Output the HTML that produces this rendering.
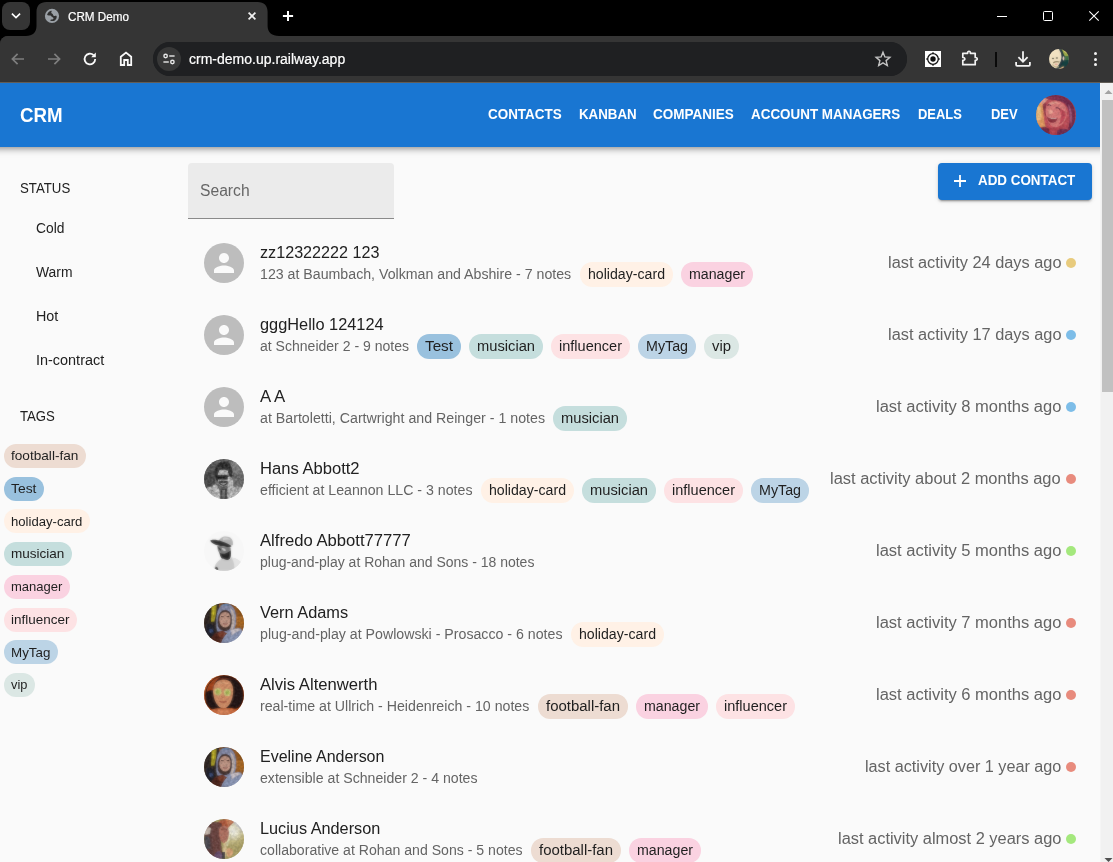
<!DOCTYPE html>
<html lang="en"><head><meta charset="utf-8"><title>CRM Demo</title>
<style>
html,body{margin:0;padding:0}
body{width:1113px;height:862px;overflow:hidden;position:relative;background:#fafafa;font-family:"Liberation Sans", sans-serif}
.t{position:absolute;white-space:nowrap;line-height:1;transform-origin:0 0;display:block}
svg{display:block;overflow:visible}
</style></head>
<body>
<svg width="0" height="0" style="position:absolute"><defs>
<filter id="nz" x="0" y="0" width="100%" height="100%"><feTurbulence type="fractalNoise" baseFrequency="0.42" numOctaves="2" seed="7"/><feColorMatrix type="matrix" values="0 0 0 0 0  0 0 0 0 0  0 0 0 0 0  1.6 0 0 0 -0.45"/></filter>
<filter id="nw" x="0" y="0" width="100%" height="100%"><feTurbulence type="fractalNoise" baseFrequency="0.5" numOctaves="2" seed="3"/><feColorMatrix type="matrix" values="0 0 0 0 1  0 0 0 0 1  0 0 0 0 1  0 1.6 0 0 -0.55"/></filter>
</defs></svg>
<div style="position:absolute;left:0;top:0;width:1113px;height:50px;background:#000"></div>
<div style="position:absolute;left:2px;top:2px;width:28px;height:28px;border-radius:8px;background:#353535"></div>
<svg style="position:absolute;left:10px;top:10px" width="12" height="12" viewBox="0 0 12 12"><path d="M1.9 3.6 L6 7.6 L10.1 3.6" fill="none" stroke="#fff" stroke-width="1.6"/></svg>
<div style="position:absolute;left:0;top:36px;width:1113px;height:46px;background:#353535;border-radius:8px 0 0 0"></div>
<div style="position:absolute;left:0;top:36px;width:1113px;height:46px;background:#353535;border-radius:8px 0 0 0"></div>
<svg style="position:absolute;left:26px;top:2px" width="253" height="34" viewBox="0 0 253 34">
<path d="M0 34 C6.5 34 10.5 30.5 10.5 24 L10.5 10 C10.5 3.5 14 0 20.5 0 L231.6 0 C238 0 241.6 3.5 241.6 10 L241.6 24 C241.6 30.5 246 34 253 34 Z" fill="#353535"/></svg>
<svg style="position:absolute;left:44px;top:8px" width="16" height="16" viewBox="0 0 16 16">
<circle cx="8" cy="7.95" r="7.1" fill="#9aa0a6"/>
<path d="M3.1 7 C3.4 5 4.8 3.4 6.6 2.9 C7.6 2.7 8 3.2 7.4 4 C6.9 4.8 7.6 5.2 8.4 5.8 C9.2 6.4 8.9 7.3 9.6 7.7 C10.6 8.3 11.6 7.6 12.6 8 C13 9.6 12.2 11.4 10.8 12.4 C9.6 13.1 8 13.2 6.6 12.8 C6 12.4 6.4 11.6 7.4 11.5 C8.6 11.5 9.6 11 9.5 10.2 C9.4 9.4 8.4 9.4 7.8 8.8 C7.2 8.2 7.2 7.5 6.4 7.4 C5.2 7.3 4 7.6 3.1 7Z" fill="#303030"/>
</svg>
<svg style="position:absolute;left:246px;top:10px" width="12" height="12" viewBox="0 0 12 12"><path d="M2.6 2.6 L9.4 9.4 M9.4 2.6 L2.6 9.4" stroke="#f0f0f0" stroke-width="1.7" fill="none"/></svg>
<svg style="position:absolute;left:281px;top:9px" width="14" height="14" viewBox="0 0 14 14"><path d="M7 1.9 V12.1 M1.9 7 H12.1" stroke="#fff" stroke-width="2" fill="none"/></svg>
<div style="position:absolute;left:997px;top:15.5px;width:10px;height:1px;background:#fff"></div>
<div style="position:absolute;left:1043px;top:11px;width:10px;height:10px;box-sizing:border-box;border:1px solid #fff;border-radius:1.5px"></div>
<svg style="position:absolute;left:1089px;top:11px" width="10" height="10" viewBox="0 0 10 10"><path d="M0.3 0.3 L9.7 9.7 M9.7 0.3 L0.3 9.7" stroke="#fff" stroke-width="1.1" fill="none"/></svg>
<svg style="position:absolute;left:10px;top:51px" width="16" height="16" viewBox="0 0 16 16"><path d="M14 8 H2.8 M7.6 2.8 L2.4 8 L7.6 13.2" stroke="#7e7e7e" stroke-width="1.7" fill="none"/></svg>
<svg style="position:absolute;left:46px;top:51px" width="16" height="16" viewBox="0 0 16 16"><path d="M2 8 H13.2 M8.4 2.8 L13.6 8 L8.4 13.2" stroke="#7e7e7e" stroke-width="1.7" fill="none"/></svg>
<svg style="position:absolute;left:82px;top:51px" width="16" height="16" viewBox="0 0 16 16"><path d="M13.2 8 A5.3 5.3 0 1 1 11.6 4.2" stroke="#fafafa" stroke-width="1.8" fill="none"/><path d="M13.8 1.6 V6.2 H9.2 Z" fill="#fafafa"/></svg>
<svg style="position:absolute;left:118px;top:50px" width="16" height="17" viewBox="0 0 16 17"><path d="M2.8 15 V6.8 L8 2.6 L13.2 6.8 V15 H9.8 V10 H6.2 V15 Z" stroke="#fafafa" stroke-width="1.8" fill="none" stroke-linejoin="miter"/></svg>
<div style="position:absolute;left:152.5px;top:42px;width:754px;height:34px;border-radius:17px;background:#202124"></div>
<div style="position:absolute;left:153px;top:42px;width:754px;height:34px;border-radius:17px;background:#1f2022"></div>
<div style="position:absolute;left:157px;top:47px;width:24px;height:24px;border-radius:12px;background:#383838"></div>
<svg style="position:absolute;left:161px;top:51px" width="16" height="16" viewBox="0 0 16 16" fill="none" stroke="#e8e8e8" stroke-width="1.4">
<circle cx="4.6" cy="5" r="1.7"/><path d="M8.2 5 H13.6"/><circle cx="11.4" cy="11" r="1.7"/><path d="M2.4 11 H7.8"/></svg>
<svg style="position:absolute;left:874px;top:50px" width="18" height="18" viewBox="0 0 18 18"><path d="M9 2.2 L10.9 6.9 L15.9 7.3 L12.1 10.6 L13.3 15.5 L9 12.9 L4.7 15.5 L5.9 10.6 L2.1 7.3 L7.1 6.9 Z" fill="none" stroke="#c4c4c4" stroke-width="1.4" stroke-linejoin="miter"/></svg>
<div style="position:absolute;left:925px;top:51px;width:16px;height:16px;background:#fff"></div>
<svg style="position:absolute;left:925px;top:51px" width="16" height="16" viewBox="0 0 16 16"><circle cx="8" cy="8" r="5.3" fill="none" stroke="#111" stroke-width="1.3"/><circle cx="8" cy="8" r="2.7" fill="#111"/><path d="M8 1 V3 M8 13 V15 M1 8 H3 M13 8 H15" stroke="#111" stroke-width="1"/></svg>
<svg style="position:absolute;left:960px;top:49px" width="20" height="20" viewBox="0 0 20 20"><path d="M2.8 4.3 H7.6 C7.3 1.6 10.7 1.6 10.4 4.3 H15.2 V8.5 C17.9 8.2 17.9 11.6 15.2 11.3 V15.7 H2.8 V11.3 C5.5 11.6 5.5 8.2 2.8 8.5 Z" fill="none" stroke="#f2f2f2" stroke-width="1.7" stroke-linejoin="round"/></svg>
<div style="position:absolute;left:995px;top:51.5px;width:2px;height:15px;background:#0a0a0a"></div>
<svg style="position:absolute;left:1014px;top:50px" width="18" height="18" viewBox="0 0 18 18"><path d="M9 1.2 V11.4 M4.4 7.2 L9 11.8 L13.6 7.2" stroke="#f2f2f2" stroke-width="1.8" fill="none"/><path d="M2.1 12 V14.8 Q2.1 15.8 3.1 15.8 H14.9 Q15.9 15.8 15.9 14.8 V12" stroke="#f2f2f2" stroke-width="1.8" fill="none"/></svg>
<svg style="position:absolute;left:1049px;top:48.9px" width="20" height="20" viewBox="0 0 20 20"><defs><clipPath id="pc"><circle cx="10" cy="10" r="10"/></clipPath><filter id="pf" x="-10%" y="-10%" width="120%" height="120%"><feGaussianBlur stdDeviation="0.8"/></filter>
</defs>
<g clip-path="url(#pc)"><g filter="url(#pf)"><rect x="-2" y="-2" width="24" height="24" fill="#f2e2c2"/>
<path d="M0 6 C1 10 1 14 3 18 L0 18Z" fill="#cfc4a8"/>
<path d="M11 -1 C15 5 15 13 8 20.5 L21 21 L21 -1Z" fill="#17403f"/>
<path d="M12.4 0 L20 0 L20 9 C18 7 16 8 15 6 C14.4 4 13.6 2 12.4 0Z" fill="#9aa848"/>
<path d="M14 1.6 C16 1 18 2.4 18.6 4.6 C17 4 15.4 3.6 14 1.6Z" fill="#dccb7c"/>
<path d="M15.6 7 H20 V11 H16Z" fill="#3f6f45"/>
<path d="M10.6 -0.6 C14.8 5 14.8 13 7.6 20.4" stroke="#0b2736" stroke-width="2" fill="none"/>
<ellipse cx="14.5" cy="9.4" rx="0.9" ry="2.1" fill="#f2d6c6"/>
<path d="M9 20 C11 19.6 13 18.4 14.4 17 L15 20Z" fill="#e8b484"/>
<ellipse cx="4" cy="9.5" rx="1.2" ry="0.7" fill="#5c5848"/><ellipse cx="7.9" cy="9" rx="1.2" ry="0.7" fill="#5c5848"/>
<path d="M4.2 13.9 C6 12.6 8.4 12.4 10.4 13" stroke="#857655" stroke-width="1.3" fill="none"/>
<ellipse cx="7.2" cy="15.3" rx="1.5" ry="0.9" fill="#e8a898"/>
<path d="M3.4 15.6 C4.6 18 8 18.8 10 17.4" stroke="#b9ab86" stroke-width="1.2" fill="none"/>
</g><g opacity="0.55"><rect x="-2" y="-2" width="24" height="24" fill="#f2e2c2"/>
<path d="M0 6 C1 10 1 14 3 18 L0 18Z" fill="#cfc4a8"/>
<path d="M11 -1 C15 5 15 13 8 20.5 L21 21 L21 -1Z" fill="#17403f"/>
<path d="M12.4 0 L20 0 L20 9 C18 7 16 8 15 6 C14.4 4 13.6 2 12.4 0Z" fill="#9aa848"/>
<path d="M14 1.6 C16 1 18 2.4 18.6 4.6 C17 4 15.4 3.6 14 1.6Z" fill="#dccb7c"/>
<path d="M15.6 7 H20 V11 H16Z" fill="#3f6f45"/>
<path d="M10.6 -0.6 C14.8 5 14.8 13 7.6 20.4" stroke="#0b2736" stroke-width="2" fill="none"/>
<ellipse cx="14.5" cy="9.4" rx="0.9" ry="2.1" fill="#f2d6c6"/>
<path d="M9 20 C11 19.6 13 18.4 14.4 17 L15 20Z" fill="#e8b484"/>
<ellipse cx="4" cy="9.5" rx="1.2" ry="0.7" fill="#5c5848"/><ellipse cx="7.9" cy="9" rx="1.2" ry="0.7" fill="#5c5848"/>
<path d="M4.2 13.9 C6 12.6 8.4 12.4 10.4 13" stroke="#857655" stroke-width="1.3" fill="none"/>
<ellipse cx="7.2" cy="15.3" rx="1.5" ry="0.9" fill="#e8a898"/>
<path d="M3.4 15.6 C4.6 18 8 18.8 10 17.4" stroke="#b9ab86" stroke-width="1.2" fill="none"/>
</g></g></svg>
<div style="position:absolute;left:1093.8px;top:51.7px;width:3px;height:3px;border-radius:50%;background:#f2f2f2"></div>
<div style="position:absolute;left:1093.8px;top:57.5px;width:3px;height:3px;border-radius:50%;background:#f2f2f2"></div>
<div style="position:absolute;left:1093.8px;top:63.3px;width:3px;height:3px;border-radius:50%;background:#f2f2f2"></div>
<div style="position:absolute;left:0;top:82px;width:1100px;height:780px;background:#fafafa"></div>
<div style="position:absolute;left:0;top:82px;width:1113px;height:1px;background:#625d56"></div>
<div style="position:absolute;left:-20px;top:83px;width:1140px;height:64px;background:#1976d2;clip-path:inset(0 0 -20px 0);box-shadow:0 2px 4px -1px rgba(0,0,0,.2),0 4px 5px 0 rgba(0,0,0,.14),0 1px 10px 0 rgba(0,0,0,.12)"></div>
<svg style="position:absolute;left:1036px;top:95px" width="40" height="40" viewBox="0 0 40 40"><defs><clipPath id="cu"><circle cx="20" cy="20" r="20"/></clipPath><filter id="fu" x="-10%" y="-10%" width="120%" height="120%"><feGaussianBlur stdDeviation="0.8"/></filter></defs><g clip-path="url(#cu)"><g filter="url(#fu)"><rect x="-4" y="-4" width="48" height="48" fill="#a03850"/><rect width="40" height="40" fill="#c44d58"/>
<path d="M0 6 C3 3 7 3 8.6 6 C7 12 7 22 9.6 32 L0 32Z" fill="#eda062"/>
<path d="M0 12 C1.6 10 4 10.4 5 13 L5.4 24 L0 26Z" fill="#f4c382"/>
<path d="M3 4 C6 1.6 10 2 12 4.6 C10 6 8.6 8 8 11 C6 9 4 7 3 4Z" fill="#eaa092"/>
<path d="M9 3 C16 -2 30 -1 36 8 C41 16 40 30 34 38 L29 40 C35 31 35 17 30 10 C26 5 15 5 9 3Z" fill="#74264a"/>
<path d="M32 9 C36 13 37 23 35 31 C34 27 34 17 32 9Z" fill="#a85a7c"/>
<path d="M12 2.4 C18 0.6 26 1.4 31 6 C25 3.6 18 3.4 12 4.6Z" fill="#8a3050"/>
<path d="M6.6 10 C7.8 8 9.8 7.6 10.6 9 C9.6 13 9.8 18 11 23 C8.8 20 6.8 15 6.6 10Z" fill="#8a2d40"/>
<path d="M9.6 16 C9 9 14.6 5 21 6 C28.4 7 32 13 30.6 21 C29 28 23.6 33 18 32 C13 31 10 24 9.6 16Z" fill="#e27c7b"/>
<path d="M12.6 8.6 C16 6.4 21 6.6 24.6 8.6 C21 8.4 16 8.6 13.2 10.4Z" fill="#f0a392"/>
<path d="M23 14 C26 13.6 29.8 16 29.8 20 C29 25 26 28.6 22.6 29.6 C25.4 25 26 19 23 14Z" fill="#c74858"/>
<path d="M12.4 15 C14 14 16.6 15 17.2 17 C16.6 19.4 14 20 12.4 18.6Z" fill="#f3a696"/>
<path d="M11.2 10.4 C12.4 9.6 14.4 9.8 15.2 10.8" stroke="#5a1c38" stroke-width="1.1" fill="none"/>
<path d="M19.6 13 C21 12.6 23 13.2 23.8 14.4" stroke="#5a1c38" stroke-width="1.1" fill="none"/>
<path d="M11 21.4 C13.6 23.4 18.6 24 21.8 22.4 C21.2 26.6 17.6 28.6 14.4 27.4 C12.2 26.4 11.2 24 11 21.4Z" fill="#8c2838"/>
<path d="M11.2 21.6 C13.6 23.4 18.6 23.8 21.6 22.4 C20 24.6 14 24.8 11.2 21.6Z" fill="#f9e2da"/>
<path d="M11 31 C14 33.4 20 33.4 25 30.4 L28 40 L9 40Z" fill="#b8404e"/>
<path d="M3 34 C7 31.6 11 32 13 34 L14 40 L3 40Z" fill="#7a2844"/>
<path d="M21 36 C25 33 31 33 34 36 L34 40 L21 40Z" fill="#6f2a50"/><rect width="40" height="40" filter="url(#nz)" opacity="0.25"/><rect width="40" height="40" filter="url(#nw)" opacity="0.14"/></g><g opacity="0.5"><rect x="-4" y="-4" width="48" height="48" fill="#a03850"/><rect width="40" height="40" fill="#c44d58"/>
<path d="M0 6 C3 3 7 3 8.6 6 C7 12 7 22 9.6 32 L0 32Z" fill="#eda062"/>
<path d="M0 12 C1.6 10 4 10.4 5 13 L5.4 24 L0 26Z" fill="#f4c382"/>
<path d="M3 4 C6 1.6 10 2 12 4.6 C10 6 8.6 8 8 11 C6 9 4 7 3 4Z" fill="#eaa092"/>
<path d="M9 3 C16 -2 30 -1 36 8 C41 16 40 30 34 38 L29 40 C35 31 35 17 30 10 C26 5 15 5 9 3Z" fill="#74264a"/>
<path d="M32 9 C36 13 37 23 35 31 C34 27 34 17 32 9Z" fill="#a85a7c"/>
<path d="M12 2.4 C18 0.6 26 1.4 31 6 C25 3.6 18 3.4 12 4.6Z" fill="#8a3050"/>
<path d="M6.6 10 C7.8 8 9.8 7.6 10.6 9 C9.6 13 9.8 18 11 23 C8.8 20 6.8 15 6.6 10Z" fill="#8a2d40"/>
<path d="M9.6 16 C9 9 14.6 5 21 6 C28.4 7 32 13 30.6 21 C29 28 23.6 33 18 32 C13 31 10 24 9.6 16Z" fill="#e27c7b"/>
<path d="M12.6 8.6 C16 6.4 21 6.6 24.6 8.6 C21 8.4 16 8.6 13.2 10.4Z" fill="#f0a392"/>
<path d="M23 14 C26 13.6 29.8 16 29.8 20 C29 25 26 28.6 22.6 29.6 C25.4 25 26 19 23 14Z" fill="#c74858"/>
<path d="M12.4 15 C14 14 16.6 15 17.2 17 C16.6 19.4 14 20 12.4 18.6Z" fill="#f3a696"/>
<path d="M11.2 10.4 C12.4 9.6 14.4 9.8 15.2 10.8" stroke="#5a1c38" stroke-width="1.1" fill="none"/>
<path d="M19.6 13 C21 12.6 23 13.2 23.8 14.4" stroke="#5a1c38" stroke-width="1.1" fill="none"/>
<path d="M11 21.4 C13.6 23.4 18.6 24 21.8 22.4 C21.2 26.6 17.6 28.6 14.4 27.4 C12.2 26.4 11.2 24 11 21.4Z" fill="#8c2838"/>
<path d="M11.2 21.6 C13.6 23.4 18.6 23.8 21.6 22.4 C20 24.6 14 24.8 11.2 21.6Z" fill="#f9e2da"/>
<path d="M11 31 C14 33.4 20 33.4 25 30.4 L28 40 L9 40Z" fill="#b8404e"/>
<path d="M3 34 C7 31.6 11 32 13 34 L14 40 L3 40Z" fill="#7a2844"/>
<path d="M21 36 C25 33 31 33 34 36 L34 40 L21 40Z" fill="#6f2a50"/><rect width="40" height="40" filter="url(#nz)" opacity="0.25"/><rect width="40" height="40" filter="url(#nw)" opacity="0.14"/></g></g></svg>
<div style="position:absolute;left:4px;top:444px;width:82px;height:24px;border-radius:12px;background:#eddcd2"></div>
<div style="position:absolute;left:4px;top:476.8px;width:40px;height:24px;border-radius:12px;background:#99c1de"></div>
<div style="position:absolute;left:4px;top:509.2px;width:86px;height:24px;border-radius:12px;background:#fff1e6"></div>
<div style="position:absolute;left:4px;top:541.8px;width:68px;height:24px;border-radius:12px;background:#c5dedd"></div>
<div style="position:absolute;left:4px;top:574.8px;width:66px;height:24px;border-radius:12px;background:#fad2e1"></div>
<div style="position:absolute;left:4px;top:607.6px;width:73px;height:24px;border-radius:12px;background:#fde2e4"></div>
<div style="position:absolute;left:4px;top:640.2px;width:54px;height:24px;border-radius:12px;background:#bcd4e6"></div>
<div style="position:absolute;left:4px;top:673px;width:31px;height:24px;border-radius:12px;background:#dbe7e4"></div>
<div style="position:absolute;left:188px;top:163px;width:206px;height:55px;border-radius:4px 4px 0 0;background:#ebebeb"></div>
<div style="position:absolute;left:188px;top:218px;width:206px;height:1px;background:#8a8a8a"></div>
<div style="position:absolute;left:938px;top:163px;width:154px;height:36.5px;border-radius:4px;background:#1976d2;box-shadow:0 3px 1px -2px rgba(0,0,0,.2),0 2px 2px 0 rgba(0,0,0,.14),0 1px 5px 0 rgba(0,0,0,.12)"></div>
<svg style="position:absolute;left:954px;top:175px" width="12" height="12" viewBox="0 0 12 12"><path d="M6 0 V12 M0 6 H12" stroke="#fff" stroke-width="1.8"/></svg>
<svg style="position:absolute;left:204px;top:243px" width="40" height="40" viewBox="0 0 40 40"><circle cx="20" cy="20" r="20" fill="#bdbdbd"/><g transform="translate(5 5) scale(1.25)"><path d="M12 12c2.21 0 4-1.79 4-4s-1.79-4-4-4-4 1.79-4 4 1.79 4 4 4zm0 2c-2.67 0-8 1.34-8 4v2h16v-2c0-2.66-5.33-4-8-4z" fill="#fafafa"/></g></svg>
<div style="position:absolute;left:579.5px;top:262px;width:93px;height:24.5px;border-radius:12.25px;background:#fff1e6"></div>
<div style="position:absolute;left:680.5px;top:262px;width:72px;height:24.5px;border-radius:12.25px;background:#fad2e1"></div>
<div style="position:absolute;left:1066px;top:258px;width:10px;height:10px;border-radius:50%;background:#e8cb7d"></div>
<svg style="position:absolute;left:204px;top:315px" width="40" height="40" viewBox="0 0 40 40"><circle cx="20" cy="20" r="20" fill="#bdbdbd"/><g transform="translate(5 5) scale(1.25)"><path d="M12 12c2.21 0 4-1.79 4-4s-1.79-4-4-4-4 1.79-4 4 1.79 4 4 4zm0 2c-2.67 0-8 1.34-8 4v2h16v-2c0-2.66-5.33-4-8-4z" fill="#fafafa"/></g></svg>
<div style="position:absolute;left:417.3px;top:334px;width:44px;height:24.5px;border-radius:12.25px;background:#99c1de"></div>
<div style="position:absolute;left:469.3px;top:334px;width:74px;height:24.5px;border-radius:12.25px;background:#c5dedd"></div>
<div style="position:absolute;left:551.3px;top:334px;width:79px;height:24.5px;border-radius:12.25px;background:#fde2e4"></div>
<div style="position:absolute;left:638.3px;top:334px;width:58px;height:24.5px;border-radius:12.25px;background:#bcd4e6"></div>
<div style="position:absolute;left:704.3px;top:334px;width:35px;height:24.5px;border-radius:12.25px;background:#dbe7e4"></div>
<div style="position:absolute;left:1066px;top:330px;width:10px;height:10px;border-radius:50%;background:#7dbde8"></div>
<svg style="position:absolute;left:204px;top:387px" width="40" height="40" viewBox="0 0 40 40"><circle cx="20" cy="20" r="20" fill="#bdbdbd"/><g transform="translate(5 5) scale(1.25)"><path d="M12 12c2.21 0 4-1.79 4-4s-1.79-4-4-4-4 1.79-4 4 1.79 4 4 4zm0 2c-2.67 0-8 1.34-8 4v2h16v-2c0-2.66-5.33-4-8-4z" fill="#fafafa"/></g></svg>
<div style="position:absolute;left:553.3px;top:406px;width:74px;height:24.5px;border-radius:12.25px;background:#c5dedd"></div>
<div style="position:absolute;left:1066px;top:402px;width:10px;height:10px;border-radius:50%;background:#7dbde8"></div>
<svg style="position:absolute;left:204px;top:459px" width="40" height="40" viewBox="0 0 40 40"><defs><clipPath id="c3"><circle cx="20" cy="20" r="20"/></clipPath><filter id="f3" x="-10%" y="-10%" width="120%" height="120%"><feGaussianBlur stdDeviation="0.8"/></filter></defs><g clip-path="url(#c3)"><g filter="url(#f3)"><rect x="-4" y="-4" width="48" height="48" fill="#6c6c6c"/><rect width="40" height="40" fill="#6c6c6c"/>
<rect x="0" y="0" width="13" height="14" fill="#5a5a5a"/><rect x="0" y="13" width="11" height="16" fill="#474747"/>
<rect x="27" y="2" width="13" height="14" fill="#8c8c8c"/><rect x="29" y="14" width="11" height="16" fill="#707070"/>
<path d="M11 18 C9 6 16 2 20 2.5 C26 2 30 8 28 19 L26 22 L13 22Z" fill="#262626"/>
<path d="M13.8 15 C13.8 10.5 24.8 10.5 24.8 15 L24.6 23 C23.6 29 15 29 14 23Z" fill="#b4b4b4"/>
<path d="M15 11.5 C17 10.4 22 10.4 24 11.8 L24 15 L15 15Z" fill="#cfcfcf"/>
<rect x="12.4" y="16" width="12.6" height="4.6" rx="2.2" fill="#161616"/>
<path d="M14.6 22.4 C16 21.6 22.6 21.6 24 22.4 C24 28 15 28.4 14.6 22.4Z" fill="#303030"/>
<path d="M16.2 23.8 C17.6 24.8 21 24.8 22.2 23.8 C21.6 26.2 17 26.2 16.2 23.8Z" fill="#f2f2f2"/>
<path d="M7 40 C6 32 8 26 11 25.5 C14 26 15.5 30 16.5 40Z" fill="#d8d8d8"/>
<path d="M23.6 18 C26 16.5 28.6 18 29 22 C30 28 29 34 27 40 L22 40 C23.4 32 24.6 26 23.6 18Z" fill="#d2d2d2"/>
<path d="M0 31 C4 27 8 27 10 29 L12 40 L0 40Z" fill="#cdcdcd"/>
<path d="M40 30 C36 26.5 31 27 29 29 L27 40 L40 40Z" fill="#c6c6c6"/>
<path d="M16.4 30 L23 29.5 L23.4 40 L16 40Z" fill="#333"/>
<path d="M18 31 L21 31 L20.6 40 L18.6 40Z" fill="#8a8a8a"/>
<rect width="40" height="40" filter="url(#nz)" opacity="0.55"/><rect width="40" height="40" filter="url(#nw)" opacity="0.3"/></g><g opacity="0.5"><rect x="-4" y="-4" width="48" height="48" fill="#6c6c6c"/><rect width="40" height="40" fill="#6c6c6c"/>
<rect x="0" y="0" width="13" height="14" fill="#5a5a5a"/><rect x="0" y="13" width="11" height="16" fill="#474747"/>
<rect x="27" y="2" width="13" height="14" fill="#8c8c8c"/><rect x="29" y="14" width="11" height="16" fill="#707070"/>
<path d="M11 18 C9 6 16 2 20 2.5 C26 2 30 8 28 19 L26 22 L13 22Z" fill="#262626"/>
<path d="M13.8 15 C13.8 10.5 24.8 10.5 24.8 15 L24.6 23 C23.6 29 15 29 14 23Z" fill="#b4b4b4"/>
<path d="M15 11.5 C17 10.4 22 10.4 24 11.8 L24 15 L15 15Z" fill="#cfcfcf"/>
<rect x="12.4" y="16" width="12.6" height="4.6" rx="2.2" fill="#161616"/>
<path d="M14.6 22.4 C16 21.6 22.6 21.6 24 22.4 C24 28 15 28.4 14.6 22.4Z" fill="#303030"/>
<path d="M16.2 23.8 C17.6 24.8 21 24.8 22.2 23.8 C21.6 26.2 17 26.2 16.2 23.8Z" fill="#f2f2f2"/>
<path d="M7 40 C6 32 8 26 11 25.5 C14 26 15.5 30 16.5 40Z" fill="#d8d8d8"/>
<path d="M23.6 18 C26 16.5 28.6 18 29 22 C30 28 29 34 27 40 L22 40 C23.4 32 24.6 26 23.6 18Z" fill="#d2d2d2"/>
<path d="M0 31 C4 27 8 27 10 29 L12 40 L0 40Z" fill="#cdcdcd"/>
<path d="M40 30 C36 26.5 31 27 29 29 L27 40 L40 40Z" fill="#c6c6c6"/>
<path d="M16.4 30 L23 29.5 L23.4 40 L16 40Z" fill="#333"/>
<path d="M18 31 L21 31 L20.6 40 L18.6 40Z" fill="#8a8a8a"/>
<rect width="40" height="40" filter="url(#nz)" opacity="0.55"/><rect width="40" height="40" filter="url(#nw)" opacity="0.3"/></g></g></svg>
<div style="position:absolute;left:480.8px;top:478px;width:93px;height:24.5px;border-radius:12.25px;background:#fff1e6"></div>
<div style="position:absolute;left:581.8px;top:478px;width:74px;height:24.5px;border-radius:12.25px;background:#c5dedd"></div>
<div style="position:absolute;left:663.8px;top:478px;width:79px;height:24.5px;border-radius:12.25px;background:#fde2e4"></div>
<div style="position:absolute;left:750.8px;top:478px;width:58px;height:24.5px;border-radius:12.25px;background:#bcd4e6"></div>
<div style="position:absolute;left:1066px;top:474px;width:10px;height:10px;border-radius:50%;background:#e88b7d"></div>
<svg style="position:absolute;left:204px;top:531px" width="40" height="40" viewBox="0 0 40 40"><defs><clipPath id="c4"><circle cx="20" cy="20" r="20"/></clipPath><filter id="f4" x="-10%" y="-10%" width="120%" height="120%"><feGaussianBlur stdDeviation="0.8"/></filter></defs><g clip-path="url(#c4)"><g filter="url(#f4)"><rect x="-4" y="-4" width="48" height="48" fill="#f7f7f7"/><rect width="40" height="40" fill="#f7f7f7"/>
<path d="M14.4 11.5 C15 6 21 4.5 25 6 C28.4 7.4 29.4 11 29 14.2 L22 13.6Z" fill="#b2b2b2"/>
<path d="M19 7 C22 6 25 7 26.4 9 C24 8.4 21 8.4 19 9.4Z" fill="#cfcfcf"/>
<path d="M6.2 9.6 C8 8.4 13 8.6 18 10.4 C22 11.8 26 13.4 27.8 15 L25.4 16.6 C21 15.6 16 15.2 12 14 C9 13 7 11.6 6.2 9.6Z" fill="#2e2e2e"/>
<path d="M13.2 15 C16 14.6 22 15.4 26.6 16.4 L27 22 C26 25 23 26 20 25.4 C16 24.6 13.4 20 13.2 15Z" fill="#7a7a7a"/>
<path d="M17.6 17 C19.6 16.6 21.6 17.6 22 19.6 C20.4 20.4 18.4 19.8 17.6 17Z" fill="#c9c9c9"/>
<path d="M14 16 C15.6 16.4 17 17.6 17.2 19.4 C15.6 19.6 14.2 18.4 14 16Z" fill="#3a3a3a"/>
<path d="M15.6 21.6 C18 23.6 22 23.2 26.6 19.4 C27.4 23 27 27 25 29 C22 30.6 18.4 29 17 26.6 C16 25 15.6 23.4 15.6 21.6Z" fill="#262626"/>
<path d="M10 40 C10.4 33 14 28.6 19 27.4 C22 29.6 25.4 29.4 27.4 26.4 C33 27.4 38 30 39 36 L39 40Z" fill="#cacaca"/>
<path d="M27.4 26.4 C33 27.4 38 30 39 36 L39 40 L30 40 C31 35 30 30 27.4 26.4Z" fill="#e4e4e4"/>
<path d="M11.4 36 C12.6 35.4 14 36.4 14.4 38.6 L12 40 L11 39Z" fill="#4a4a4a"/><rect width="40" height="40" filter="url(#nz)" opacity="0.0"/><rect width="40" height="40" filter="url(#nw)" opacity="0.0"/></g><g opacity="0.5"><rect x="-4" y="-4" width="48" height="48" fill="#f7f7f7"/><rect width="40" height="40" fill="#f7f7f7"/>
<path d="M14.4 11.5 C15 6 21 4.5 25 6 C28.4 7.4 29.4 11 29 14.2 L22 13.6Z" fill="#b2b2b2"/>
<path d="M19 7 C22 6 25 7 26.4 9 C24 8.4 21 8.4 19 9.4Z" fill="#cfcfcf"/>
<path d="M6.2 9.6 C8 8.4 13 8.6 18 10.4 C22 11.8 26 13.4 27.8 15 L25.4 16.6 C21 15.6 16 15.2 12 14 C9 13 7 11.6 6.2 9.6Z" fill="#2e2e2e"/>
<path d="M13.2 15 C16 14.6 22 15.4 26.6 16.4 L27 22 C26 25 23 26 20 25.4 C16 24.6 13.4 20 13.2 15Z" fill="#7a7a7a"/>
<path d="M17.6 17 C19.6 16.6 21.6 17.6 22 19.6 C20.4 20.4 18.4 19.8 17.6 17Z" fill="#c9c9c9"/>
<path d="M14 16 C15.6 16.4 17 17.6 17.2 19.4 C15.6 19.6 14.2 18.4 14 16Z" fill="#3a3a3a"/>
<path d="M15.6 21.6 C18 23.6 22 23.2 26.6 19.4 C27.4 23 27 27 25 29 C22 30.6 18.4 29 17 26.6 C16 25 15.6 23.4 15.6 21.6Z" fill="#262626"/>
<path d="M10 40 C10.4 33 14 28.6 19 27.4 C22 29.6 25.4 29.4 27.4 26.4 C33 27.4 38 30 39 36 L39 40Z" fill="#cacaca"/>
<path d="M27.4 26.4 C33 27.4 38 30 39 36 L39 40 L30 40 C31 35 30 30 27.4 26.4Z" fill="#e4e4e4"/>
<path d="M11.4 36 C12.6 35.4 14 36.4 14.4 38.6 L12 40 L11 39Z" fill="#4a4a4a"/><rect width="40" height="40" filter="url(#nz)" opacity="0.0"/><rect width="40" height="40" filter="url(#nw)" opacity="0.0"/></g></g></svg>
<div style="position:absolute;left:1066px;top:546px;width:10px;height:10px;border-radius:50%;background:#a4e87d"></div>
<svg style="position:absolute;left:204px;top:603px" width="40" height="40" viewBox="0 0 40 40"><defs><clipPath id="c5"><circle cx="20" cy="20" r="20"/></clipPath><filter id="f5" x="-10%" y="-10%" width="120%" height="120%"><feGaussianBlur stdDeviation="0.8"/></filter></defs><g clip-path="url(#c5)"><g filter="url(#f5)"><rect x="-4" y="-4" width="48" height="48" fill="#5a3a1a"/><rect width="40" height="40" fill="#8a4e16"/>
<rect x="0" y="0" width="15" height="40" fill="#2a211e"/>
<path d="M7.6 3.4 L12.6 1.4 L12.2 10 L10.4 18.4 L7 19Z" fill="#a89a1e"/>
<path d="M8.6 4 L10.6 3 L10 11 L8.6 14Z" fill="#d6c62a"/>
<path d="M2 22 C4 20 8 20.6 10 24 L10 34 L2 32Z" fill="#1c1c26"/>
<path d="M5 26 C7 25 9 26 9.6 29 L6 30Z" fill="#3a4a78"/>
<rect x="30" y="4" width="10" height="26" fill="#96581a"/>
<path d="M31 14 L40 12 L40 24 L31 22Z" fill="#b06a20"/>
<path d="M12.6 26 C10.6 10 15 1 22 0.6 C29 0.6 33.4 8 32 20 C31.4 26 29 29.4 26 30 L14 30Z" fill="#8b90ae"/>
<path d="M16 3 C19 0.6 24.6 0.4 27.6 3 C24 2.4 19.6 2.6 16 3Z" fill="#5f86b2"/>
<path d="M26 4.6 C31 8 31.6 16 30 23 C29.4 26 27.6 28 26 28.6 C28 22 28.6 12 26 4.6Z" fill="#c9b9b2"/>
<path d="M14 23 C12.6 12 16.6 7 21 7 C26.4 7 28.6 12 27.6 20 C27 26 24.6 28 21 28 C17.6 28 15 26.4 14 23Z" fill="#3c2722"/>
<path d="M15.4 18 C15 12 17.6 9 21 9 C25 9 27 12.4 26.6 18 C26.2 22.6 24 24.4 21.4 24.4 C18.4 24.4 15.8 22 15.4 18Z" fill="#c79a88"/>
<path d="M17 13.6 H19.6 M22.6 13.6 H25.2" stroke="#4a3028" stroke-width="1"/>
<path d="M19 20.6 C20.4 21.4 22.4 21.4 23.6 20.6" stroke="#8a4a44" stroke-width="1" fill="none"/>
<path d="M6 40 C7 31 14 27 19 28.6 L25 34 L24 40Z" fill="#4e2218"/>
<path d="M14 30 C17 27 20 27.6 22 30 L20 35 L15 34Z" fill="#7a3a26"/>
<path d="M17 40 C21 29 30 24 37 25.6 L40 30 L40 40Z" fill="#8e9abb"/>
<path d="M27 27 C31 25 35 25.4 37.6 27 C34 28 30 30 27.6 33Z" fill="#cfc6cc"/><rect width="40" height="40" filter="url(#nz)" opacity="0.3"/><rect width="40" height="40" filter="url(#nw)" opacity="0.16"/></g><g opacity="0.5"><rect x="-4" y="-4" width="48" height="48" fill="#5a3a1a"/><rect width="40" height="40" fill="#8a4e16"/>
<rect x="0" y="0" width="15" height="40" fill="#2a211e"/>
<path d="M7.6 3.4 L12.6 1.4 L12.2 10 L10.4 18.4 L7 19Z" fill="#a89a1e"/>
<path d="M8.6 4 L10.6 3 L10 11 L8.6 14Z" fill="#d6c62a"/>
<path d="M2 22 C4 20 8 20.6 10 24 L10 34 L2 32Z" fill="#1c1c26"/>
<path d="M5 26 C7 25 9 26 9.6 29 L6 30Z" fill="#3a4a78"/>
<rect x="30" y="4" width="10" height="26" fill="#96581a"/>
<path d="M31 14 L40 12 L40 24 L31 22Z" fill="#b06a20"/>
<path d="M12.6 26 C10.6 10 15 1 22 0.6 C29 0.6 33.4 8 32 20 C31.4 26 29 29.4 26 30 L14 30Z" fill="#8b90ae"/>
<path d="M16 3 C19 0.6 24.6 0.4 27.6 3 C24 2.4 19.6 2.6 16 3Z" fill="#5f86b2"/>
<path d="M26 4.6 C31 8 31.6 16 30 23 C29.4 26 27.6 28 26 28.6 C28 22 28.6 12 26 4.6Z" fill="#c9b9b2"/>
<path d="M14 23 C12.6 12 16.6 7 21 7 C26.4 7 28.6 12 27.6 20 C27 26 24.6 28 21 28 C17.6 28 15 26.4 14 23Z" fill="#3c2722"/>
<path d="M15.4 18 C15 12 17.6 9 21 9 C25 9 27 12.4 26.6 18 C26.2 22.6 24 24.4 21.4 24.4 C18.4 24.4 15.8 22 15.4 18Z" fill="#c79a88"/>
<path d="M17 13.6 H19.6 M22.6 13.6 H25.2" stroke="#4a3028" stroke-width="1"/>
<path d="M19 20.6 C20.4 21.4 22.4 21.4 23.6 20.6" stroke="#8a4a44" stroke-width="1" fill="none"/>
<path d="M6 40 C7 31 14 27 19 28.6 L25 34 L24 40Z" fill="#4e2218"/>
<path d="M14 30 C17 27 20 27.6 22 30 L20 35 L15 34Z" fill="#7a3a26"/>
<path d="M17 40 C21 29 30 24 37 25.6 L40 30 L40 40Z" fill="#8e9abb"/>
<path d="M27 27 C31 25 35 25.4 37.6 27 C34 28 30 30 27.6 33Z" fill="#cfc6cc"/><rect width="40" height="40" filter="url(#nz)" opacity="0.3"/><rect width="40" height="40" filter="url(#nw)" opacity="0.16"/></g></g></svg>
<div style="position:absolute;left:570.8px;top:622px;width:93px;height:24.5px;border-radius:12.25px;background:#fff1e6"></div>
<div style="position:absolute;left:1066px;top:618px;width:10px;height:10px;border-radius:50%;background:#e88b7d"></div>
<svg style="position:absolute;left:204px;top:675px" width="40" height="40" viewBox="0 0 40 40"><defs><clipPath id="c6"><circle cx="20" cy="20" r="20"/></clipPath><filter id="f6" x="-10%" y="-10%" width="120%" height="120%"><feGaussianBlur stdDeviation="0.8"/></filter></defs><g clip-path="url(#c6)"><g filter="url(#f6)"><rect x="-4" y="-4" width="48" height="48" fill="#8a3a18"/><rect width="40" height="40" fill="#b24a18"/>
<path d="M0 0 L16 0 C10 4 6 10 4 18 L0 22Z" fill="#c85a20"/>
<path d="M1.4 24 C0 10 9 1 20 0.6 C32 0.4 40 8 39.6 22 C39.4 30 34 36 28 33 L11 34 C5 35 2 30 1.4 24Z" fill="#1f1212"/>
<path d="M8 8 C12 2 24 0.6 30 5 C24 3.6 14 4 8 8Z" fill="#5a1e12"/>
<path d="M2.6 17 C3.4 8.6 9.6 3 17 1.8 C12 5 9.4 9 9 15.6 C7 15 4.6 15.6 2.6 17Z" fill="#a8441a"/>
<path d="M9 17 C8.6 8 14 4.6 19.6 4.6 C26 4.6 29.6 9 29.2 17 C28.8 25 25 33.4 19.4 33.4 C13.6 33.4 9.4 25 9 17Z" fill="#d69068"/>
<path d="M12 9 C15 6.6 24 6.6 27 9.4 C23 8.4 16 8.2 12 9Z" fill="#e2a67c"/>
<circle cx="14" cy="16.8" r="3.7" fill="#d0c97c"/><circle cx="14" cy="16.8" r="2" fill="#a6b852"/>
<circle cx="23.4" cy="17.4" r="3.7" fill="#d0c97c"/><circle cx="23.4" cy="17.4" r="2" fill="#a6b852"/>
<path d="M17.6 21.6 C18.4 22.6 19.8 22.6 20.6 21.6" stroke="#b06a48" stroke-width="1" fill="none"/>
<path d="M15.6 26.4 C17.6 27.2 20.6 27.2 22.6 26.4" stroke="#a8503c" stroke-width="1.3" fill="none"/>
<path d="M3 40 C6 34 12 32.6 19.4 33.4 C26 32.6 33 34 37 40Z" fill="#cf6e40"/>
<path d="M14 34 C17 35 22 35 25 34 L26 40 L13 40Z" fill="#dc8458"/><rect width="40" height="40" filter="url(#nz)" opacity="0.22"/><rect width="40" height="40" filter="url(#nw)" opacity="0.1"/></g><g opacity="0.5"><rect x="-4" y="-4" width="48" height="48" fill="#8a3a18"/><rect width="40" height="40" fill="#b24a18"/>
<path d="M0 0 L16 0 C10 4 6 10 4 18 L0 22Z" fill="#c85a20"/>
<path d="M1.4 24 C0 10 9 1 20 0.6 C32 0.4 40 8 39.6 22 C39.4 30 34 36 28 33 L11 34 C5 35 2 30 1.4 24Z" fill="#1f1212"/>
<path d="M8 8 C12 2 24 0.6 30 5 C24 3.6 14 4 8 8Z" fill="#5a1e12"/>
<path d="M2.6 17 C3.4 8.6 9.6 3 17 1.8 C12 5 9.4 9 9 15.6 C7 15 4.6 15.6 2.6 17Z" fill="#a8441a"/>
<path d="M9 17 C8.6 8 14 4.6 19.6 4.6 C26 4.6 29.6 9 29.2 17 C28.8 25 25 33.4 19.4 33.4 C13.6 33.4 9.4 25 9 17Z" fill="#d69068"/>
<path d="M12 9 C15 6.6 24 6.6 27 9.4 C23 8.4 16 8.2 12 9Z" fill="#e2a67c"/>
<circle cx="14" cy="16.8" r="3.7" fill="#d0c97c"/><circle cx="14" cy="16.8" r="2" fill="#a6b852"/>
<circle cx="23.4" cy="17.4" r="3.7" fill="#d0c97c"/><circle cx="23.4" cy="17.4" r="2" fill="#a6b852"/>
<path d="M17.6 21.6 C18.4 22.6 19.8 22.6 20.6 21.6" stroke="#b06a48" stroke-width="1" fill="none"/>
<path d="M15.6 26.4 C17.6 27.2 20.6 27.2 22.6 26.4" stroke="#a8503c" stroke-width="1.3" fill="none"/>
<path d="M3 40 C6 34 12 32.6 19.4 33.4 C26 32.6 33 34 37 40Z" fill="#cf6e40"/>
<path d="M14 34 C17 35 22 35 25 34 L26 40 L13 40Z" fill="#dc8458"/><rect width="40" height="40" filter="url(#nz)" opacity="0.22"/><rect width="40" height="40" filter="url(#nw)" opacity="0.1"/></g></g></svg>
<div style="position:absolute;left:537.6px;top:694px;width:90px;height:24.5px;border-radius:12.25px;background:#eddcd2"></div>
<div style="position:absolute;left:635.6px;top:694px;width:72px;height:24.5px;border-radius:12.25px;background:#fad2e1"></div>
<div style="position:absolute;left:715.6px;top:694px;width:79px;height:24.5px;border-radius:12.25px;background:#fde2e4"></div>
<div style="position:absolute;left:1066px;top:690px;width:10px;height:10px;border-radius:50%;background:#e88b7d"></div>
<svg style="position:absolute;left:204px;top:747px" width="40" height="40" viewBox="0 0 40 40"><defs><clipPath id="c7"><circle cx="20" cy="20" r="20"/></clipPath><filter id="f7" x="-10%" y="-10%" width="120%" height="120%"><feGaussianBlur stdDeviation="0.8"/></filter></defs><g clip-path="url(#c7)"><g filter="url(#f7)"><rect x="-4" y="-4" width="48" height="48" fill="#5a3a1a"/><rect width="40" height="40" fill="#8a4e16"/>
<rect x="0" y="0" width="15" height="40" fill="#2a211e"/>
<path d="M7.6 3.4 L12.6 1.4 L12.2 10 L10.4 18.4 L7 19Z" fill="#a89a1e"/>
<path d="M8.6 4 L10.6 3 L10 11 L8.6 14Z" fill="#d6c62a"/>
<path d="M2 22 C4 20 8 20.6 10 24 L10 34 L2 32Z" fill="#1c1c26"/>
<path d="M5 26 C7 25 9 26 9.6 29 L6 30Z" fill="#3a4a78"/>
<rect x="30" y="4" width="10" height="26" fill="#96581a"/>
<path d="M31 14 L40 12 L40 24 L31 22Z" fill="#b06a20"/>
<path d="M12.6 26 C10.6 10 15 1 22 0.6 C29 0.6 33.4 8 32 20 C31.4 26 29 29.4 26 30 L14 30Z" fill="#8b90ae"/>
<path d="M16 3 C19 0.6 24.6 0.4 27.6 3 C24 2.4 19.6 2.6 16 3Z" fill="#5f86b2"/>
<path d="M26 4.6 C31 8 31.6 16 30 23 C29.4 26 27.6 28 26 28.6 C28 22 28.6 12 26 4.6Z" fill="#c9b9b2"/>
<path d="M14 23 C12.6 12 16.6 7 21 7 C26.4 7 28.6 12 27.6 20 C27 26 24.6 28 21 28 C17.6 28 15 26.4 14 23Z" fill="#3c2722"/>
<path d="M15.4 18 C15 12 17.6 9 21 9 C25 9 27 12.4 26.6 18 C26.2 22.6 24 24.4 21.4 24.4 C18.4 24.4 15.8 22 15.4 18Z" fill="#c79a88"/>
<path d="M17 13.6 H19.6 M22.6 13.6 H25.2" stroke="#4a3028" stroke-width="1"/>
<path d="M19 20.6 C20.4 21.4 22.4 21.4 23.6 20.6" stroke="#8a4a44" stroke-width="1" fill="none"/>
<path d="M6 40 C7 31 14 27 19 28.6 L25 34 L24 40Z" fill="#4e2218"/>
<path d="M14 30 C17 27 20 27.6 22 30 L20 35 L15 34Z" fill="#7a3a26"/>
<path d="M17 40 C21 29 30 24 37 25.6 L40 30 L40 40Z" fill="#8e9abb"/>
<path d="M27 27 C31 25 35 25.4 37.6 27 C34 28 30 30 27.6 33Z" fill="#cfc6cc"/><rect width="40" height="40" filter="url(#nz)" opacity="0.3"/><rect width="40" height="40" filter="url(#nw)" opacity="0.16"/></g><g opacity="0.5"><rect x="-4" y="-4" width="48" height="48" fill="#5a3a1a"/><rect width="40" height="40" fill="#8a4e16"/>
<rect x="0" y="0" width="15" height="40" fill="#2a211e"/>
<path d="M7.6 3.4 L12.6 1.4 L12.2 10 L10.4 18.4 L7 19Z" fill="#a89a1e"/>
<path d="M8.6 4 L10.6 3 L10 11 L8.6 14Z" fill="#d6c62a"/>
<path d="M2 22 C4 20 8 20.6 10 24 L10 34 L2 32Z" fill="#1c1c26"/>
<path d="M5 26 C7 25 9 26 9.6 29 L6 30Z" fill="#3a4a78"/>
<rect x="30" y="4" width="10" height="26" fill="#96581a"/>
<path d="M31 14 L40 12 L40 24 L31 22Z" fill="#b06a20"/>
<path d="M12.6 26 C10.6 10 15 1 22 0.6 C29 0.6 33.4 8 32 20 C31.4 26 29 29.4 26 30 L14 30Z" fill="#8b90ae"/>
<path d="M16 3 C19 0.6 24.6 0.4 27.6 3 C24 2.4 19.6 2.6 16 3Z" fill="#5f86b2"/>
<path d="M26 4.6 C31 8 31.6 16 30 23 C29.4 26 27.6 28 26 28.6 C28 22 28.6 12 26 4.6Z" fill="#c9b9b2"/>
<path d="M14 23 C12.6 12 16.6 7 21 7 C26.4 7 28.6 12 27.6 20 C27 26 24.6 28 21 28 C17.6 28 15 26.4 14 23Z" fill="#3c2722"/>
<path d="M15.4 18 C15 12 17.6 9 21 9 C25 9 27 12.4 26.6 18 C26.2 22.6 24 24.4 21.4 24.4 C18.4 24.4 15.8 22 15.4 18Z" fill="#c79a88"/>
<path d="M17 13.6 H19.6 M22.6 13.6 H25.2" stroke="#4a3028" stroke-width="1"/>
<path d="M19 20.6 C20.4 21.4 22.4 21.4 23.6 20.6" stroke="#8a4a44" stroke-width="1" fill="none"/>
<path d="M6 40 C7 31 14 27 19 28.6 L25 34 L24 40Z" fill="#4e2218"/>
<path d="M14 30 C17 27 20 27.6 22 30 L20 35 L15 34Z" fill="#7a3a26"/>
<path d="M17 40 C21 29 30 24 37 25.6 L40 30 L40 40Z" fill="#8e9abb"/>
<path d="M27 27 C31 25 35 25.4 37.6 27 C34 28 30 30 27.6 33Z" fill="#cfc6cc"/><rect width="40" height="40" filter="url(#nz)" opacity="0.3"/><rect width="40" height="40" filter="url(#nw)" opacity="0.16"/></g></g></svg>
<div style="position:absolute;left:1066px;top:762px;width:10px;height:10px;border-radius:50%;background:#e88b7d"></div>
<svg style="position:absolute;left:204px;top:819px" width="40" height="40" viewBox="0 0 40 40"><defs><clipPath id="c8"><circle cx="20" cy="20" r="20"/></clipPath><filter id="f8" x="-10%" y="-10%" width="120%" height="120%"><feGaussianBlur stdDeviation="0.8"/></filter></defs><g clip-path="url(#c8)"><g filter="url(#f8)"><rect x="-4" y="-4" width="48" height="48" fill="#a89a62"/><rect width="40" height="40" fill="#ada265"/>
<path d="M22 0 L40 0 L40 16 C34 12 28 6 22 0Z" fill="#c9c9d9"/>
<radialGradient id="sg" cx="29" cy="12.4" r="17" gradientUnits="userSpaceOnUse"><stop offset="0" stop-color="#fdfcf4"/><stop offset="0.3" stop-color="#eeead0"/><stop offset="0.65" stop-color="#cfc48c" stop-opacity="0.75"/><stop offset="1" stop-color="#ada265" stop-opacity="0"/></radialGradient>
<circle cx="29" cy="12.4" r="17" fill="url(#sg)"/>
<path d="M26 0 L40 0 L40 13 C35 10 30 5 26 0Z" fill="#cdcddc" opacity="0.65"/>
<path d="M28 13 L20 26 L24 27 Z" fill="#e4e0b4" opacity="0.8"/>
<path d="M26 22 H40 M25 26 H40 M27 30 H40" stroke="#c4b878" stroke-width="1.2" opacity="0.7"/>
<path d="M14 3 C18 -1 27 -1 30 3 C27 6 24 8 22 12 L16 10Z" fill="#b2583a"/>
<path d="M22 1 C25 0 28 1 29.6 3 C27 4 25 5 24 7Z" fill="#d8835a"/>
<path d="M0 10 C3 4 8 2 13 3 C11 8 10 14 12 22 L14 40 L0 40Z" fill="#5c3a38"/>
<path d="M7 5 C11 2 16 2.4 18 5 C17 10 16 16 17 23 L19 40 L10 40 C9 28 7 16 7 5Z" fill="#6a403c"/>
<path d="M0.4 12 C2 8 5 7.4 7 9 L6 15 L1 16Z" fill="#cbbbb0"/>
<path d="M0 18 C2 16.4 5 17 6 20 L6.4 30 L0 30Z" fill="#48464e"/>
<path d="M15 12 C15 7.6 19 6 21.6 7 C24.6 8 25.4 12 24.6 17 C24 22 21.6 24.6 19.4 24 C16.4 23 15 18 15 12Z" fill="#b3705f"/>
<path d="M17 10.6 C18.6 9.6 21.6 9.8 23 11" stroke="#7a4038" stroke-width="0.9" fill="none"/>
<path d="M19.6 25 L22 22 L23 32 L21 40 L18 40Z" fill="#dcc592"/>
<path d="M22.6 30 C24.6 28.4 28 29 29 32 C29.6 35 27 38 24 38 C22.4 36 22 33 22.6 30Z" fill="#e2a97a"/>
<path d="M10 40 C10 34 13 31.6 16 32.4 C18 34 19 37 18.6 40Z" fill="#6a4f70"/>
<path d="M18 33 L21 33 L21 40 L18 40Z" fill="#3e3a40"/><rect width="40" height="40" filter="url(#nz)" opacity="0.25"/><rect width="40" height="40" filter="url(#nw)" opacity="0.2"/></g><g opacity="0.5"><rect x="-4" y="-4" width="48" height="48" fill="#a89a62"/><rect width="40" height="40" fill="#ada265"/>
<path d="M22 0 L40 0 L40 16 C34 12 28 6 22 0Z" fill="#c9c9d9"/>
<radialGradient id="sg" cx="29" cy="12.4" r="17" gradientUnits="userSpaceOnUse"><stop offset="0" stop-color="#fdfcf4"/><stop offset="0.3" stop-color="#eeead0"/><stop offset="0.65" stop-color="#cfc48c" stop-opacity="0.75"/><stop offset="1" stop-color="#ada265" stop-opacity="0"/></radialGradient>
<circle cx="29" cy="12.4" r="17" fill="url(#sg)"/>
<path d="M26 0 L40 0 L40 13 C35 10 30 5 26 0Z" fill="#cdcddc" opacity="0.65"/>
<path d="M28 13 L20 26 L24 27 Z" fill="#e4e0b4" opacity="0.8"/>
<path d="M26 22 H40 M25 26 H40 M27 30 H40" stroke="#c4b878" stroke-width="1.2" opacity="0.7"/>
<path d="M14 3 C18 -1 27 -1 30 3 C27 6 24 8 22 12 L16 10Z" fill="#b2583a"/>
<path d="M22 1 C25 0 28 1 29.6 3 C27 4 25 5 24 7Z" fill="#d8835a"/>
<path d="M0 10 C3 4 8 2 13 3 C11 8 10 14 12 22 L14 40 L0 40Z" fill="#5c3a38"/>
<path d="M7 5 C11 2 16 2.4 18 5 C17 10 16 16 17 23 L19 40 L10 40 C9 28 7 16 7 5Z" fill="#6a403c"/>
<path d="M0.4 12 C2 8 5 7.4 7 9 L6 15 L1 16Z" fill="#cbbbb0"/>
<path d="M0 18 C2 16.4 5 17 6 20 L6.4 30 L0 30Z" fill="#48464e"/>
<path d="M15 12 C15 7.6 19 6 21.6 7 C24.6 8 25.4 12 24.6 17 C24 22 21.6 24.6 19.4 24 C16.4 23 15 18 15 12Z" fill="#b3705f"/>
<path d="M17 10.6 C18.6 9.6 21.6 9.8 23 11" stroke="#7a4038" stroke-width="0.9" fill="none"/>
<path d="M19.6 25 L22 22 L23 32 L21 40 L18 40Z" fill="#dcc592"/>
<path d="M22.6 30 C24.6 28.4 28 29 29 32 C29.6 35 27 38 24 38 C22.4 36 22 33 22.6 30Z" fill="#e2a97a"/>
<path d="M10 40 C10 34 13 31.6 16 32.4 C18 34 19 37 18.6 40Z" fill="#6a4f70"/>
<path d="M18 33 L21 33 L21 40 L18 40Z" fill="#3e3a40"/><rect width="40" height="40" filter="url(#nz)" opacity="0.25"/><rect width="40" height="40" filter="url(#nw)" opacity="0.2"/></g></g></svg>
<div style="position:absolute;left:530.9px;top:838px;width:90px;height:24.5px;border-radius:12.25px;background:#eddcd2"></div>
<div style="position:absolute;left:628.9px;top:838px;width:72px;height:24.5px;border-radius:12.25px;background:#fad2e1"></div>
<div style="position:absolute;left:1066px;top:834px;width:10px;height:10px;border-radius:50%;background:#a4e87d"></div>
<div style="position:absolute;left:1100px;top:83px;width:13px;height:779px;background:#f1f1f1"></div>
<div style="position:absolute;left:1100px;top:83px;width:1px;height:779px;background:#f5f5f5"></div>
<div style="position:absolute;left:1102px;top:100px;width:11px;height:292px;background:#c1c1c1"></div>
<svg style="position:absolute;left:1104px;top:89px" width="9" height="6" viewBox="0 0 9 6"><path d="M0.5 5 L4.5 1 L8.5 5Z" fill="#a3a3a3"/></svg>
<svg style="position:absolute;left:1104px;top:857px" width="9" height="6" viewBox="0 0 9 6"><path d="M0.5 1 L4.5 5 L8.5 1Z" fill="#505050"/></svg>
<span class="t" style="left:68.0px;top:10.64px;font-size:12px;font-weight:400;color:#fff;transform:scaleX(0.9733);-webkit-text-stroke:0.2px #fff;">CRM Demo</span>
<span class="t" style="left:189.4px;top:52.25px;font-size:14px;font-weight:400;color:#fff;transform:scaleX(1.0004);-webkit-text-stroke:0.2px #fff;">crm-demo.up.railway.app</span>
<span class="t" style="left:20.3px;top:104.87px;font-size:20px;font-weight:700;color:#fff;transform:scaleX(0.9353);">CRM</span>
<span class="t" style="left:487.7px;top:107.05px;font-size:14px;font-weight:700;color:#fff;transform:scaleX(0.9592);">CONTACTS</span>
<span class="t" style="left:578.5px;top:107.05px;font-size:14px;font-weight:700;color:#fff;transform:scaleX(0.9510);">KANBAN</span>
<span class="t" style="left:653.0px;top:107.05px;font-size:14px;font-weight:700;color:#fff;transform:scaleX(0.9648);">COMPANIES</span>
<span class="t" style="left:750.8px;top:107.05px;font-size:14px;font-weight:700;color:#fff;transform:scaleX(0.9591);">ACCOUNT MANAGERS</span>
<span class="t" style="left:918.3px;top:107.05px;font-size:14px;font-weight:700;color:#fff;transform:scaleX(0.9230);">DEALS</span>
<span class="t" style="left:990.7px;top:107.05px;font-size:14px;font-weight:700;color:#fff;transform:scaleX(0.9272);">DEV</span>
<span class="t" style="left:20.3px;top:180.95px;font-size:14px;font-weight:400;color:#212121;transform:scaleX(0.9444);">STATUS</span>
<span class="t" style="left:36.2px;top:220.95px;font-size:14px;font-weight:400;color:#212121;transform:scaleX(0.9862);">Cold</span>
<span class="t" style="left:36.2px;top:264.95px;font-size:14px;font-weight:400;color:#212121;transform:scaleX(0.9915);">Warm</span>
<span class="t" style="left:36.2px;top:308.95px;font-size:14px;font-weight:400;color:#212121;transform:scaleX(1.0231);">Hot</span>
<span class="t" style="left:36.2px;top:352.95px;font-size:14px;font-weight:400;color:#212121;transform:scaleX(1.0311);">In-contract</span>
<span class="t" style="left:20.3px;top:409.25px;font-size:14px;font-weight:400;color:#212121;transform:scaleX(0.9413);">TAGS</span>
<span class="t" style="left:11.3px;top:449.40px;font-size:13px;font-weight:400;color:#1f1f1f;transform:scaleX(1.0478);">football-fan</span>
<span class="t" style="left:11.3px;top:482.20px;font-size:13px;font-weight:400;color:#1f1f1f;transform:scaleX(1.0653);">Test</span>
<span class="t" style="left:11.3px;top:514.60px;font-size:13px;font-weight:400;color:#1f1f1f;transform:scaleX(1.0081);">holiday-card</span>
<span class="t" style="left:11.3px;top:547.20px;font-size:13px;font-weight:400;color:#1f1f1f;transform:scaleX(1.0410);">musician</span>
<span class="t" style="left:11.3px;top:580.20px;font-size:13px;font-weight:400;color:#1f1f1f;transform:scaleX(1.0017);">manager</span>
<span class="t" style="left:11.3px;top:613.00px;font-size:13px;font-weight:400;color:#1f1f1f;transform:scaleX(1.0359);">influencer</span>
<span class="t" style="left:11.3px;top:645.60px;font-size:13px;font-weight:400;color:#1f1f1f;transform:scaleX(1.0288);">MyTag</span>
<span class="t" style="left:11.3px;top:678.40px;font-size:13px;font-weight:400;color:#1f1f1f;transform:scaleX(0.9865);">vip</span>
<span class="t" style="left:200.0px;top:182.86px;font-size:16px;font-weight:400;color:#666;transform:scaleX(0.9782);">Search</span>
<span class="t" style="left:978.1px;top:173.15px;font-size:14px;font-weight:700;color:#fff;transform:scaleX(0.9574);">ADD CONTACT</span>
<span class="t" style="left:260.3px;top:244.86px;font-size:16px;font-weight:400;color:#212121;transform:scaleX(1.0099);">zz12322222 123</span>
<span class="t" style="left:260.3px;top:266.75px;font-size:14px;font-weight:400;color:#646464;transform:scaleX(1.0123);">123 at Baumbach, Volkman and Abshire - 7 notes</span>
<span class="t" style="left:587.5px;top:266.95px;font-size:14px;font-weight:400;color:#1f1f1f;transform:scaleX(1.0096);">holiday-card</span>
<span class="t" style="left:688.5px;top:266.95px;font-size:14px;font-weight:400;color:#1f1f1f;transform:scaleX(1.0133);">manager</span>
<span class="t" style="left:887.6px;top:255.06px;font-size:16px;font-weight:400;color:#646464;transform:scaleX(1.0213);">last activity 24 days ago</span>
<span class="t" style="left:260.3px;top:316.86px;font-size:16px;font-weight:400;color:#212121;transform:scaleX(1.0215);">gggHello 124124</span>
<span class="t" style="left:260.3px;top:338.75px;font-size:14px;font-weight:400;color:#646464;transform:scaleX(1.0023);">at Schneider 2 - 9 notes</span>
<span class="t" style="left:425.3px;top:338.95px;font-size:14px;font-weight:400;color:#1f1f1f;transform:scaleX(1.0900);">Test</span>
<span class="t" style="left:477.3px;top:338.95px;font-size:14px;font-weight:400;color:#1f1f1f;transform:scaleX(1.0498);">musician</span>
<span class="t" style="left:559.3px;top:338.95px;font-size:14px;font-weight:400;color:#1f1f1f;transform:scaleX(1.0378);">influencer</span>
<span class="t" style="left:646.3px;top:338.95px;font-size:14px;font-weight:400;color:#1f1f1f;transform:scaleX(1.0186);">MyTag</span>
<span class="t" style="left:712.3px;top:338.95px;font-size:14px;font-weight:400;color:#1f1f1f;transform:scaleX(1.0611);">vip</span>
<span class="t" style="left:887.6px;top:327.06px;font-size:16px;font-weight:400;color:#646464;transform:scaleX(1.0213);">last activity 17 days ago</span>
<span class="t" style="left:260.3px;top:388.86px;font-size:16px;font-weight:400;color:#212121;transform:scaleX(1.0486);">A A</span>
<span class="t" style="left:260.3px;top:410.75px;font-size:14px;font-weight:400;color:#646464;transform:scaleX(1.0145);">at Bartoletti, Cartwright and Reinger - 1 notes</span>
<span class="t" style="left:561.3px;top:410.95px;font-size:14px;font-weight:400;color:#1f1f1f;transform:scaleX(1.0498);">musician</span>
<span class="t" style="left:875.7px;top:399.06px;font-size:16px;font-weight:400;color:#646464;transform:scaleX(1.0321);">last activity 8 months ago</span>
<span class="t" style="left:260.3px;top:460.86px;font-size:16px;font-weight:400;color:#212121;transform:scaleX(1.0367);">Hans Abbott2</span>
<span class="t" style="left:260.3px;top:482.75px;font-size:14px;font-weight:400;color:#646464;transform:scaleX(1.0124);">efficient at Leannon LLC - 3 notes</span>
<span class="t" style="left:488.8px;top:482.95px;font-size:14px;font-weight:400;color:#1f1f1f;transform:scaleX(1.0096);">holiday-card</span>
<span class="t" style="left:589.8px;top:482.95px;font-size:14px;font-weight:400;color:#1f1f1f;transform:scaleX(1.0498);">musician</span>
<span class="t" style="left:671.8px;top:482.95px;font-size:14px;font-weight:400;color:#1f1f1f;transform:scaleX(1.0378);">influencer</span>
<span class="t" style="left:758.8px;top:482.95px;font-size:14px;font-weight:400;color:#1f1f1f;transform:scaleX(1.0186);">MyTag</span>
<span class="t" style="left:830.4px;top:471.06px;font-size:16px;font-weight:400;color:#646464;transform:scaleX(1.0293);">last activity about 2 months ago</span>
<span class="t" style="left:260.3px;top:532.86px;font-size:16px;font-weight:400;color:#212121;transform:scaleX(1.0399);">Alfredo Abbott77777</span>
<span class="t" style="left:260.3px;top:554.75px;font-size:14px;font-weight:400;color:#646464;transform:scaleX(0.9987);">plug-and-play at Rohan and Sons - 18 notes</span>
<span class="t" style="left:875.7px;top:543.06px;font-size:16px;font-weight:400;color:#646464;transform:scaleX(1.0321);">last activity 5 months ago</span>
<span class="t" style="left:260.3px;top:604.86px;font-size:16px;font-weight:400;color:#212121;transform:scaleX(1.0211);">Vern Adams</span>
<span class="t" style="left:260.3px;top:626.75px;font-size:14px;font-weight:400;color:#646464;transform:scaleX(1.0123);">plug-and-play at Powlowski - Prosacco - 6 notes</span>
<span class="t" style="left:578.8px;top:626.95px;font-size:14px;font-weight:400;color:#1f1f1f;transform:scaleX(1.0096);">holiday-card</span>
<span class="t" style="left:875.7px;top:615.06px;font-size:16px;font-weight:400;color:#646464;transform:scaleX(1.0321);">last activity 7 months ago</span>
<span class="t" style="left:260.3px;top:676.86px;font-size:16px;font-weight:400;color:#212121;transform:scaleX(1.0404);">Alvis Altenwerth</span>
<span class="t" style="left:260.3px;top:698.75px;font-size:14px;font-weight:400;color:#646464;transform:scaleX(1.0120);">real-time at Ullrich - Heidenreich - 10 notes</span>
<span class="t" style="left:545.6px;top:698.95px;font-size:14px;font-weight:400;color:#1f1f1f;transform:scaleX(1.0681);">football-fan</span>
<span class="t" style="left:643.6px;top:698.95px;font-size:14px;font-weight:400;color:#1f1f1f;transform:scaleX(1.0133);">manager</span>
<span class="t" style="left:723.6px;top:698.95px;font-size:14px;font-weight:400;color:#1f1f1f;transform:scaleX(1.0378);">influencer</span>
<span class="t" style="left:875.7px;top:687.06px;font-size:16px;font-weight:400;color:#646464;transform:scaleX(1.0321);">last activity 6 months ago</span>
<span class="t" style="left:260.3px;top:748.86px;font-size:16px;font-weight:400;color:#212121;transform:scaleX(0.9989);">Eveline Anderson</span>
<span class="t" style="left:260.3px;top:770.75px;font-size:14px;font-weight:400;color:#646464;transform:scaleX(1.0089);">extensible at Schneider 2 - 4 notes</span>
<span class="t" style="left:864.7px;top:759.06px;font-size:16px;font-weight:400;color:#646464;transform:scaleX(1.0130);">last activity over 1 year ago</span>
<span class="t" style="left:260.3px;top:820.86px;font-size:16px;font-weight:400;color:#212121;transform:scaleX(1.0168);">Lucius Anderson</span>
<span class="t" style="left:260.3px;top:842.75px;font-size:14px;font-weight:400;color:#646464;transform:scaleX(1.0072);">collaborative at Rohan and Sons - 5 notes</span>
<span class="t" style="left:538.9px;top:842.95px;font-size:14px;font-weight:400;color:#1f1f1f;transform:scaleX(1.0681);">football-fan</span>
<span class="t" style="left:636.9px;top:842.95px;font-size:14px;font-weight:400;color:#1f1f1f;transform:scaleX(1.0133);">manager</span>
<span class="t" style="left:837.7px;top:831.06px;font-size:16px;font-weight:400;color:#646464;transform:scaleX(1.0254);">last activity almost 2 years ago</span>
</body></html>
